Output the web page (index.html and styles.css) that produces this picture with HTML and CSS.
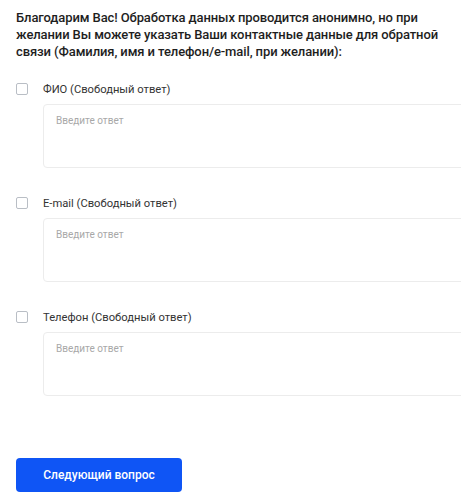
FILE: index.html
```html
<!DOCTYPE html>
<html lang="ru">
<head>
    <meta charset="UTF-8">
    <meta name="viewport" content="width=device-width, initial-scale=1.0">
    <title>Обратная связь</title>
    <link rel="stylesheet" href="styles.css">
</head>
<body>
    <div class="survey">
        <h2 class="question-title">Благодарим Вас! Обработка данных проводится анонимно, но при желании Вы можете указать Ваши контактные данные для обратной связи (Фамилия, имя и телефон/e-mail, при желании):</h2>

        <div class="answer">
            <label class="answer-label">
                <input type="checkbox" class="answer-check">
                <span>ФИО (Свободный ответ)</span>
            </label>
            <textarea class="answer-text" placeholder="Введите ответ"></textarea>
        </div>

        <div class="answer">
            <label class="answer-label">
                <input type="checkbox" class="answer-check">
                <span>E-mail (Свободный ответ)</span>
            </label>
            <textarea class="answer-text" placeholder="Введите ответ"></textarea>
        </div>

        <div class="answer">
            <label class="answer-label">
                <input type="checkbox" class="answer-check">
                <span>Телефон (Свободный ответ)</span>
            </label>
            <textarea class="answer-text" placeholder="Введите ответ"></textarea>
        </div>

        <button class="next-button">Следующий вопрос</button>
    </div>
</body>
</html>
```

FILE: styles.css
```css
body {
    margin: 0;
    font-family: Roboto, "Noto Sans", sans-serif;
    background-color: #fff;
    color: #222;
    overflow-x: hidden;
}
.survey {
    padding: 9px 16px 0 16px;
}
.question-title {
    margin: 0 0 20px 0;
    font-size: 13px;
    line-height: 17px;
    font-weight: 500;
    letter-spacing: -0.1px;
    color: #1e1e1e;
}
.answer {
    margin-bottom: 26px;
}
.answer-label {
    display: flex;
    align-items: center;
    height: 18px;
    font-size: 11.2px;
    color: #333;
    cursor: pointer;
}
.answer-check {
    appearance: none;
    width: 12px;
    height: 12px;
    margin: 0 15px 0 0;
    border: 1px solid #b9bec5;
    border-radius: 2px;
    background: #fff;
}
.answer-text {
    display: block;
    box-sizing: border-box;
    width: 440px;
    height: 64px;
    margin: 6px 0 0 27px;
    padding: 10px 12px;
    border: 1px solid #ececec;
    border-radius: 4px;
    font-family: inherit;
    font-size: 10px;
    resize: none;
    outline: none;
}
.answer-text::placeholder {
    color: #a8a8a8;
}
.next-button {
    margin-top: 36px;
    width: 166px;
    height: 34px;
    border: none;
    border-radius: 4px;
    background-color: #0f55f5;
    color: #fff;
    font-family: inherit;
    font-size: 12px;
    font-weight: 500;
    cursor: pointer;
}
```
